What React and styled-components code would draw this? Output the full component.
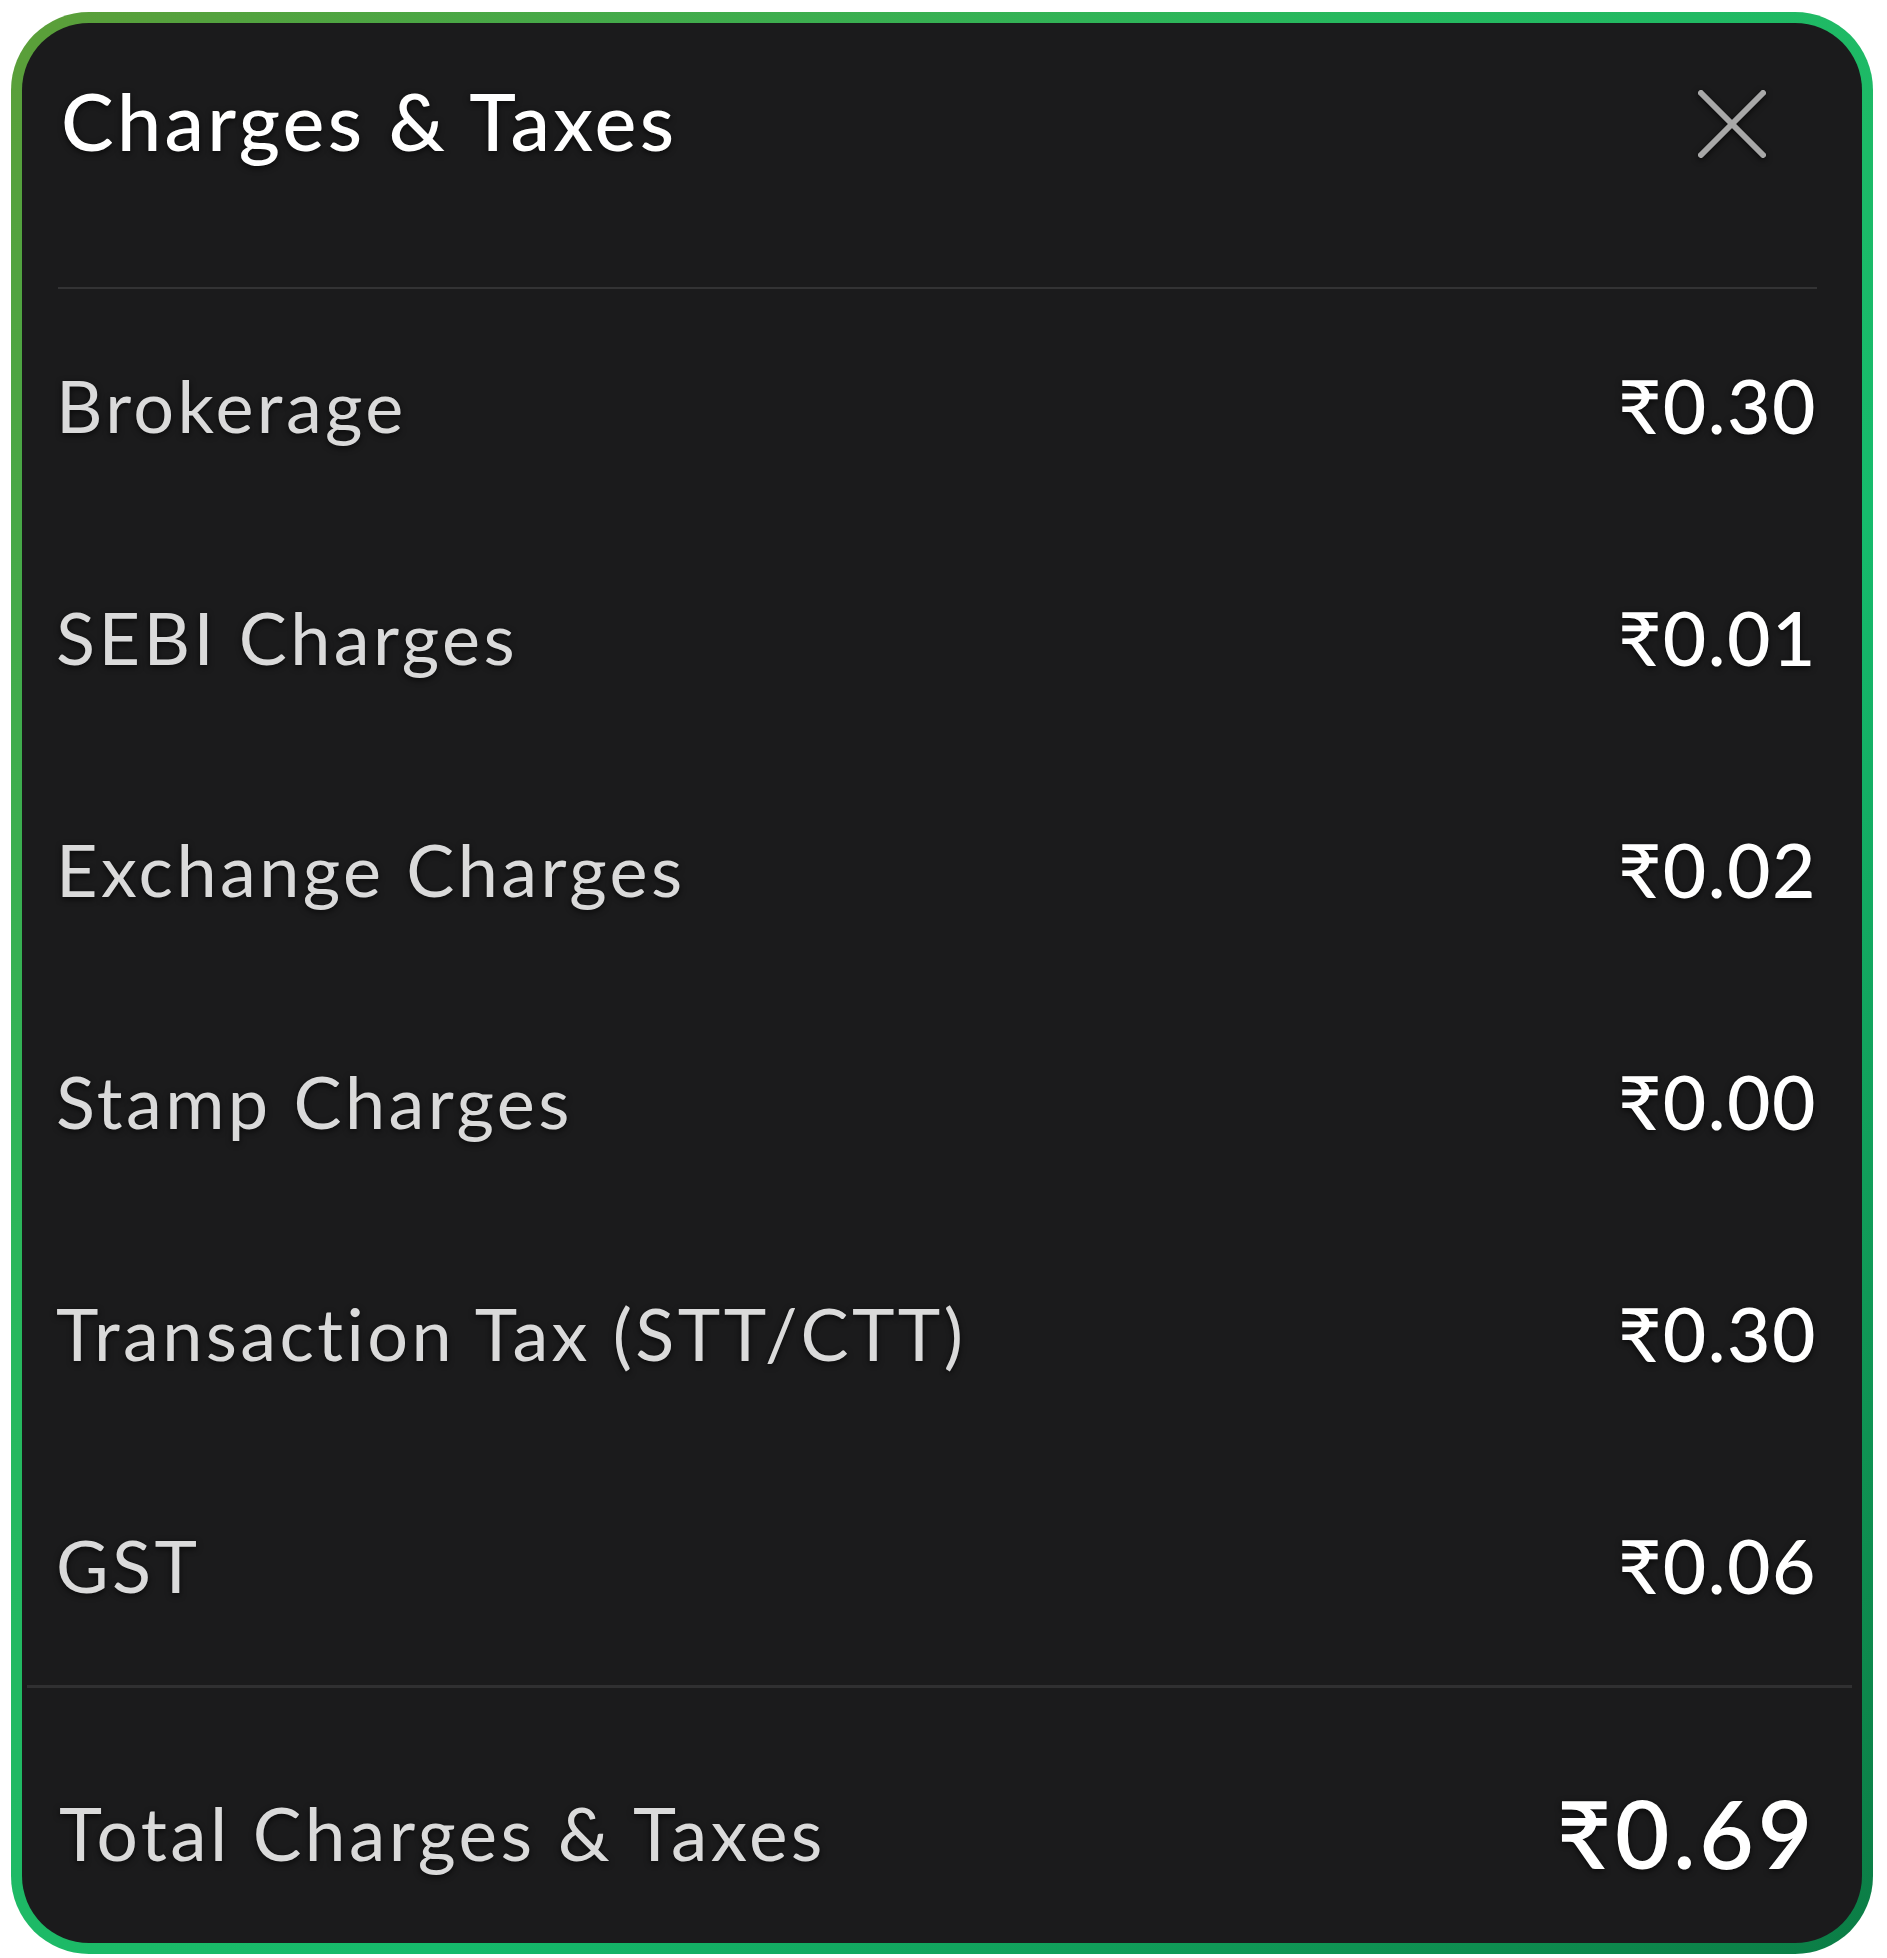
import styled, { createGlobalStyle } from "styled-components";

const GlobalStyle = createGlobalStyle`
  html, body {
    margin: 0;
    padding: 0;
    background: #ffffff;
  }
  body {
    font-family: Lato, "Noto Sans", "DejaVu Sans", sans-serif;
  }
`;

const Card = styled.div`
  box-sizing: border-box;
  width: 1862px;
  height: 1942px;
  margin: 12px 0 0 11px;
  border: 11px solid transparent;
  border-radius: 78px;
  background:
    linear-gradient(#1b1b1c, #1b1b1c) padding-box,
    linear-gradient(135deg, #5c9e38 0%, #27b85e 35%, #16bb6c 62%, #0b7c45 100%) border-box;
  display: flex;
  flex-direction: column;
  overflow: hidden;
`;

const Header = styled.div`
  display: flex;
  align-items: center;
  justify-content: space-between;
  height: 100px;
  padding: 47px 94px 0 39px;
`;

const Title = styled.h1`
  margin: 0;
  font-size: 79px;
  line-height: 1;
  font-weight: 500;
  letter-spacing: 3.3px;
  color: #ffffff;
  text-shadow: 0 2px 6px rgba(0, 0, 0, 0.7);
`;

const CloseButton = styled.button`
  width: 72px;
  height: 72px;
  margin-top: 8px;
  padding: 0;
  border: none;
  background: none;
  cursor: pointer;
  filter: drop-shadow(0 2px 3px rgba(0, 0, 0, 0.7));
`;

const Divider = styled.div`
  height: ${(p) => p.$thick}px;
  margin: ${(p) => p.$margin};
  background: ${(p) => p.$color};
`;

const Row = styled.div`
  display: flex;
  align-items: center;
  justify-content: space-between;
  height: ${(p) => p.$height}px;
  padding: ${(p) => p.$pad};
`;

const Label = styled.span`
  font-size: ${(p) => (p.$total ? 73 : 72)}px;
  line-height: 1;
  font-weight: 400;
  letter-spacing: 3.4px;
  color: #dadada;
  text-shadow: 0 2px 6px rgba(0, 0, 0, 0.7);
`;

const Amount = styled.span`
  font-size: ${(p) => (p.$big ? 94 : 75)}px;
  line-height: 1;
  font-weight: ${(p) => (p.$big ? 600 : 500)};
  letter-spacing: ${(p) => (p.$big ? 3.8 : 1.5)}px;
  margin-right: ${(p) => (p.$big ? 4 : 3)}px;
  color: #ffffff;
  text-shadow: 0 2px 6px rgba(0, 0, 0, 0.7);
`;

const charges = [
  { label: "Brokerage", amount: "₹0.30" },
  { label: "SEBI Charges", amount: "₹0.01" },
  { label: "Exchange Charges", amount: "₹0.02" },
  { label: "Stamp Charges", amount: "₹0.00" },
  { label: "Transaction Tax (STT/CTT)", amount: "₹0.30" },
  { label: "GST", amount: "₹0.06" },
];

function CloseIcon() {
  return (
    <svg width="72" height="72" viewBox="0 0 72 72">
      <g stroke="#a8a8a8" strokeWidth="6" strokeLinecap="round">
        <line x1="5" y1="5" x2="67" y2="67" />
        <line x1="67" y1="5" x2="5" y2="67" />
      </g>
    </svg>
  );
}

export default function App() {
  return (
    <>
      <GlobalStyle />
      <Card>
        <Header>
          <Title>Charges &amp; Taxes</Title>
          <CloseButton aria-label="Close">
            <CloseIcon />
          </CloseButton>
        </Header>
        <Divider $thick={2} $margin="117px 45px 0 36px" $color="#333334" />
        {charges.map((c) => (
          <Row key={c.label} $height={232} $pad="0 42px 0 34px">
            <Label>{c.label}</Label>
            <Amount>{c.amount}</Amount>
          </Row>
        ))}
        <Divider $thick={3} $margin="4px 10px 0 5px" $color="#303031" />
        <Row $height={220} $pad="35px 42px 0 37px">
          <Label $total>Total Charges &amp; Taxes</Label>
          <Amount $big>₹0.69</Amount>
        </Row>
      </Card>
    </>
  );
}
